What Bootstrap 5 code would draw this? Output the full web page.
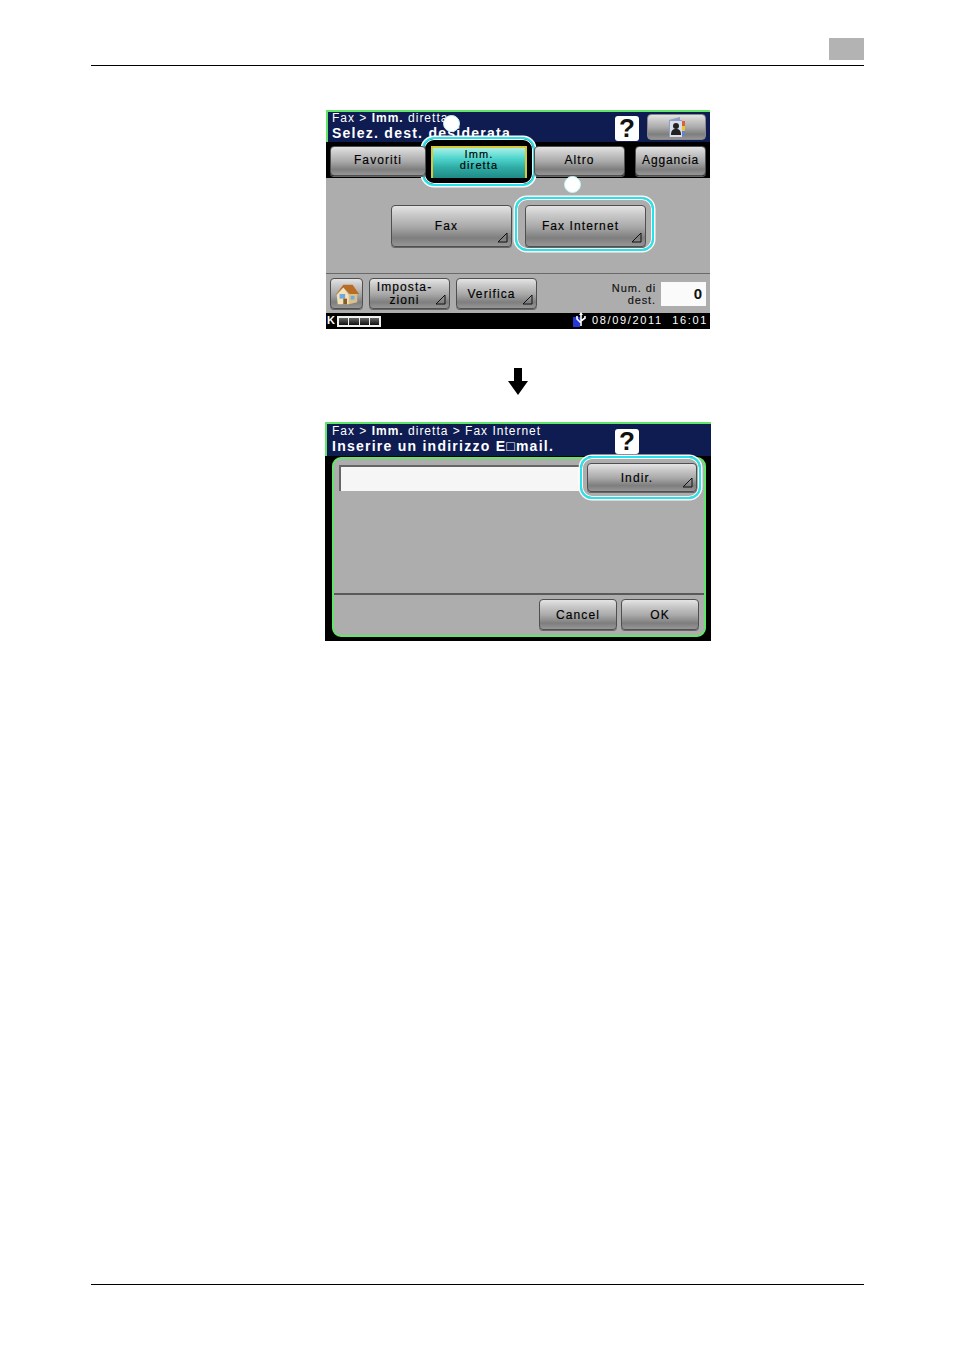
<!DOCTYPE html>
<html lang="it">
<head>
<meta charset="utf-8">
<title>Fax Internet</title>
<link href="https://cdn.jsdelivr.net/npm/bootstrap@5.3.0/dist/css/bootstrap.min.css" rel="stylesheet">
<style>
html,body{margin:0;background:#fff;}
.sheet{height:1350px;overflow:hidden;font-family:"Liberation Sans",Arial,sans-serif;color:#111;}
.pagehead{height:66px;margin:0 90px 0 91px;border-bottom:1px solid #000;padding-top:38px;}
.greybox{width:35px;height:22px;background:#b3b3b3;}
.pagefoot{height:1px;margin:0 90px 65px 91px;background:#000;}
.scr{position:relative;background:#000;}
.scr1{width:384px;height:219px;margin:44px 0 0 326px;}
.scr2{width:386px;height:219px;margin:0 0 0 325px;}
.topbar{background:#0e1c52;color:#fff;height:32px;border-top:2px solid #62e66a;padding:0 0 0 6px;line-height:1;position:relative;}
.scr1 .topbar{border-left:2px solid #62e66a;padding-left:4px;}
.scr2 .topbar{height:34px;margin:0 0 1px 0;border-left:2px solid #62e66a;padding:1px 0 0 5px;}
.crumb{font-size:12px;letter-spacing:1px;height:14px;white-space:nowrap;}
.crumb b{font-weight:700;}
.headline{font-size:14px;font-weight:700;letter-spacing:1.25px;white-space:nowrap;}
.helpkey{position:absolute;top:4px;width:24px;height:25px;background:#fff;border-radius:3px;color:#111;font-weight:700;font-size:26px;line-height:25px;text-align:center;}
.scr1 .helpkey{left:287px;}
.scr2 .helpkey{left:288px;top:5px;}
.kbtn{position:relative;display:flex;align-items:center;justify-content:center;padding:0;border:1px solid #4f4f4f;border-radius:4px;color:#000;font-size:12px;line-height:12px;letter-spacing:1.1px;font-weight:400;-webkit-text-stroke:.15px #000;background:linear-gradient(#e4e4e4 0,#c9c9c9 22%,#a9a9a9 52%,#7e7e7e 80%,#969696 100%);box-shadow:0 1px 0 #666;text-align:center;}
.bookkey{position:absolute;left:319px;top:2px;width:59px;height:26px;box-shadow:none;border-color:#888;}
.tabrow{height:36px;padding-top:4px;position:relative;}
.tab{height:30px;position:relative;z-index:2;padding-bottom:2px;}
.tab-fav{width:96px;margin-left:4px;}
.tab-alt{width:91px;margin-left:7px;padding-bottom:3px;}
.tab-agg{width:71px;margin-left:10px;font-size:12px;letter-spacing:.85px;}
.tab-on{width:96px;height:32px;margin-left:5px;border:2px solid #d8c936;border-bottom:0;border-radius:0;background:linear-gradient(#a8f0e6 0,#4ed5cd 35%,#2faba5 65%,#1f8a85 100%);box-shadow:none;font-size:11px;line-height:10.5px;flex-direction:column;padding-bottom:7px;z-index:3;}
.ring{position:absolute;border:2.5px solid #26e3ec;border-radius:12px;box-shadow:0 0 0 1.5px #fff,inset 0 0 0 1px #fff;z-index:1;}
.ring-tab{left:96px;top:-5px;width:113px;height:49px;background:#000;}
.ring-fax{left:-10px;top:-8px;width:139px;height:54px;}
.ring-ind{left:-7px;top:-7px;width:121px;height:43px;z-index:0;}
.dot{position:absolute;width:17px;height:17px;border-radius:50%;background:#fff;border:1px solid #bff5f7;z-index:4;}
.dot-a{left:117px;top:5px;}
.dot-b{left:238px;top:66px;}
.grey{background:#adadad;}
.pick{height:96px;padding:27px 0 0 65px;gap:13px;border-bottom:1px solid #6a6a6a;}
.pickbtn{width:121px;height:42px;font-size:12px;padding-right:10px;}
.corner{position:absolute;right:3px;bottom:3px;width:11px;height:11px;}
.fax-wrap{position:relative;}
.fax-wrap .kbtn{z-index:2;}
.toolrow{height:39px;padding:4px 4px 0 4px;position:relative;}
.homekey{width:33px;height:31px;margin-right:6px;}
.toolkey{width:81px;height:31px;margin-right:6px;padding-right:10px;}
.toolkey2{line-height:13px;flex-direction:column;}
.numlabel{font-size:11px;line-height:12px;letter-spacing:.9px;text-align:right;margin:4px 5px 0 auto;-webkit-text-stroke:.15px #111;}
.numbox{width:45px;height:24px;background:#fafafa;margin-top:4px;font-size:15px;font-weight:700;text-align:right;line-height:24px;padding-right:4px;}
.statusbar{height:16px;color:#fff;line-height:14px;font-size:11px;letter-spacing:1.65px;position:relative;}
.kmark{font-weight:700;font-size:11px;width:11px;padding-left:1px;letter-spacing:0;}
.toner{width:44px;height:11px;margin-top:3px;background:#f0f0f0;padding:2px;gap:1px;}
.toner span{flex:1;background:linear-gradient(#666,#111);}
.stamp{margin-left:auto;padding-right:2px;gap:4px;height:14px;}
.arrowzone{height:93px;padding:39px 0 0 508px;}
.panel{margin:0 5px 4px 7px;height:180px;border:2px solid #62e66a;border-radius:9px;background:#adadad;display:flex;flex-direction:column;}
.addr{height:102px;padding:6px 0 0 5px;position:relative;}
.addrfield{width:241px;height:26px;background:#f6f6f6;box-shadow:inset 2px 2px 0 #666;}
.indwrap{position:relative;margin:-2px 0 0 7px;}
.indbtn{width:110px;height:29px;z-index:2;padding-right:10px;}
.bar-sep{height:2px;background:#5a5a5a;margin-top:32px;}
.actions{justify-content:flex-end;padding:4px 5px 0 0;gap:4px;}
.actbtn{width:78px;height:31px;}
</style>
</head>
<body>
<div class="sheet d-flex flex-column">
  <div class="pagehead d-flex justify-content-end"><div class="greybox"></div></div>

  <section class="scr scr1">
    <div class="topbar">
      <div class="crumb">Fax &gt; <b>Imm.</b> diretta</div>
      <div class="headline">Selez. dest. desiderata</div>
      <div class="helpkey">?</div>
      <div class="bookkey kbtn">
        <svg width="26" height="24" viewBox="0 0 26 24"><path d="M5 5 16 2v3h2v17H5z" fill="#8fa0c4"/><rect x="6" y="6" width="12" height="16" fill="#d9dee8"/><circle cx="12" cy="11" r="3" fill="#222"/><path d="M7 20c0-5 2-6 5-6s5 1 5 6z" fill="#222"/><rect x="18" y="6" width="3" height="5" fill="#d9603a"/><rect x="18" y="11" width="3" height="5" fill="#e4c53a"/><rect x="18" y="16" width="3" height="5" fill="#6b7fd0"/></svg>
      </div>
    </div>
    <div class="tabrow d-flex">
      <div class="ring ring-tab"></div>
      <div class="kbtn tab tab-fav">Favoriti</div>
      <div class="kbtn tab tab-on"><span>Imm.</span><span>diretta</span></div>
      <div class="kbtn tab tab-alt">Altro</div>
      <div class="kbtn tab tab-agg">Aggancia</div>
    </div>
    <div class="grey pick d-flex">
      <div class="kbtn pickbtn">Fax<svg class="corner" viewBox="0 0 11 11"><path d="M1 10 10 1v9z" fill="none" stroke="#111"/></svg></div>
      <div class="fax-wrap">
        <div class="ring ring-fax"></div>
        <div class="kbtn pickbtn">Fax Internet<svg class="corner" viewBox="0 0 11 11"><path d="M1 10 10 1v9z" fill="none" stroke="#111"/></svg></div>
      </div>
    </div>
    <div class="grey toolrow d-flex">
      <div class="kbtn homekey">
        <svg width="26" height="26" viewBox="0 0 28 26"><path d="M3 14 10 6l6 8v10H4z" fill="#f4e4b4"/><path d="M16 13h9v9l-9 2z" fill="#d9c088"/><path d="M1 15 10 3h10l7 10H17L10 6z" fill="#b96c24"/><rect x="6" y="13" width="6" height="5" fill="#6fa8e6"/><rect x="18" y="15" width="4" height="4" fill="#6fa8e6"/><rect x="10" y="18" width="4" height="6" fill="#8a5a2a"/></svg>
      </div>
      <div class="kbtn toolkey toolkey2"><span>Imposta-</span><span>zioni</span><svg class="corner" viewBox="0 0 11 11"><path d="M1 10 10 1v9z" fill="none" stroke="#111"/></svg></div>
      <div class="kbtn toolkey">Verifica<svg class="corner" viewBox="0 0 11 11"><path d="M1 10 10 1v9z" fill="none" stroke="#111"/></svg></div>
      <div class="numlabel">Num. di<br>dest.</div>
      <div class="numbox">0</div>
    </div>
    <div class="statusbar d-flex">
      <div class="kmark">K</div>
      <div class="toner d-flex"><span></span><span></span><span></span><span></span></div>
      <div class="stamp d-flex align-items-center">
        <svg width="15" height="16" viewBox="0 0 15 16"><rect x="0" y="5" width="7" height="10" fill="#2438d8"/><path d="M8 2v12M8 11 4 7V4M8 9l4-3V4" fill="none" stroke="#fff" stroke-width="1.6"/><path d="M6 3l2-3 2 3z" fill="#fff"/></svg>
        <span>08/09/2011&nbsp; 16:01</span>
      </div>
    </div>
    <div class="dot dot-a"></div>
    <div class="dot dot-b"></div>
  </section>

  <div class="arrowzone">
    <svg class="d-block" width="20" height="27" viewBox="0 0 20 27"><path d="M6 0h8v13h6L10 27 0 13h6z" fill="#000"/></svg>
  </div>

  <section class="scr scr2">
    <div class="topbar">
      <div class="crumb">Fax &gt; <b>Imm.</b> diretta &gt; Fax Internet</div>
      <div class="headline">Inserire un indirizzo E□mail.</div>
      <div class="helpkey">?</div>
    </div>
    <div class="panel">
      <div class="addr d-flex">
        <div class="addrfield"></div>
        <div class="indwrap">
          <div class="ring ring-ind"></div>
          <div class="kbtn indbtn">Indir.<svg class="corner" viewBox="0 0 11 11"><path d="M1 10 10 1v9z" fill="none" stroke="#111"/></svg></div>
        </div>
      </div>
      <div class="bar-sep"></div>
      <div class="actions d-flex">
        <div class="kbtn actbtn">Cancel</div>
        <div class="kbtn actbtn">OK</div>
      </div>
    </div>
  </section>

  <div class="pagefoot mt-auto"></div>
</div>
<script src="https://cdn.jsdelivr.net/npm/bootstrap@5.3.0/dist/js/bootstrap.bundle.min.js"></script>
</body>
</html>
